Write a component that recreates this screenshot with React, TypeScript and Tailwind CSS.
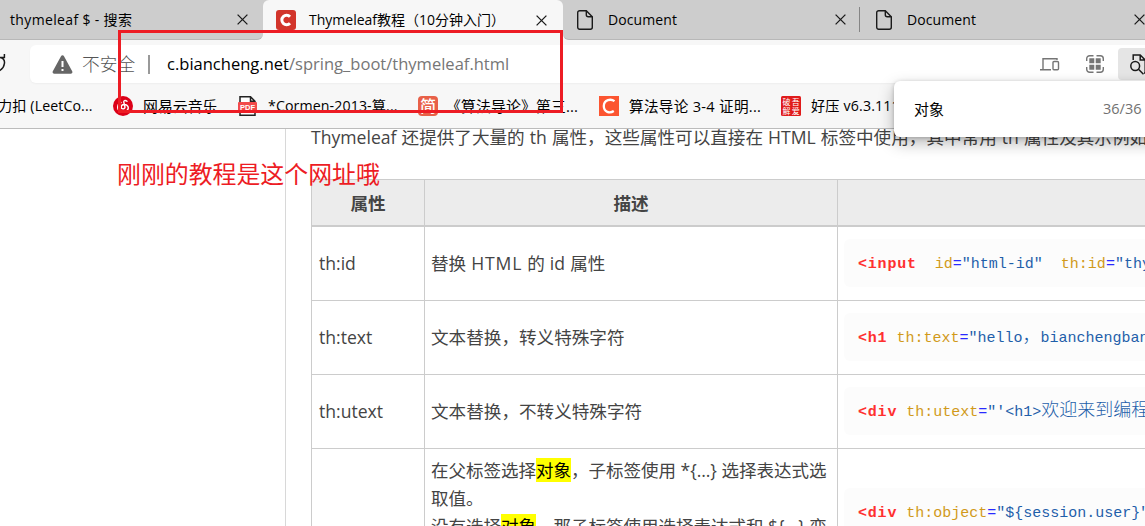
import React from "react";

function Close() {
  return (
    <svg className="size-[11px] shrink-0" viewBox="0 0 11 11" stroke="#1a1a1a" strokeWidth="1.3">
      <path d="M.6.6 10.4 10.4M10.4.6.6 10.4" />
    </svg>
  );
}

function PageIcon() {
  return (
    <svg className="h-5 w-4 shrink-0" viewBox="0 0 16 20" fill="none" stroke="#1a1a1a" strokeWidth="1.4">
      <path d="M2.7.7h6.6l6 6v10.6a2 2 0 0 1-2 2H2.7a2 2 0 0 1-2-2V2.7a2 2 0 0 1 2-2Z" />
      <path d="M9.3.7v4a2 2 0 0 0 2 2h4" />
    </svg>
  );
}

function TabStrip() {
  return (
    <div className="flex h-10 bg-[#f7f7f7] text-[14px] leading-5 text-black">
      <div className="flex w-[263px] shrink-0 items-center rounded-br-md border-b border-[#b8b8b8] bg-[#cdcdcd] pl-[10px]">
        <span className="w-[227px] tracking-[0.35px]">thymeleaf $ - 搜索</span>
        <Close />
      </div>
      <div className="w-[300px] shrink-0 bg-[linear-gradient(#cdcdcd_50%,#f7f7f7_50%)]">
        <div className="flex h-10 items-center rounded-t-md bg-[#f7f7f7] pl-[13px]">
          <svg className="size-5 shrink-0" viewBox="0 0 20 20">
            <rect width="20" height="20" rx="3" fill="#d2342b" />
            <path d="M14 6.8A4.7 4.7 0 1 0 14 13.2" fill="none" stroke="#fff" strokeWidth="3" />
          </svg>
          <span className="ml-[13px] w-[227px]">Thymeleaf教程（10分钟入门）</span>
          <Close />
        </div>
      </div>
      <div className="flex w-[600px] shrink-0 items-center rounded-bl-md border-b border-[#b8b8b8] bg-[#cdcdcd] pl-[14px]">
        <PageIcon />
        <span className="ml-[15px] w-[227px] tracking-[0.1px]">Document</span>
        <Close />
        <div className="ml-[13px] h-[25px] w-px bg-[#858585]" />
        <div className="w-4" />
        <PageIcon />
        <span className="ml-[15px] w-[227px] tracking-[0.1px]">Document</span>
        <Close />
      </div>
    </div>
  );
}

function AddressBar() {
  return (
    <div className="flex h-[43px] items-start pt-[5px]">
      <svg className="mt-[9px] h-5 w-[30px] shrink-0" viewBox="0 0 30 20" fill="none" stroke="#1a1a1a" strokeWidth="1.5">
        <path d="M-1 3.5C3 3.5 5 6 4.4 9.5 4 13 2 15.5-1 17M-2 3.4 4.4 3.4V-1" />
      </svg>
      <div className="flex h-[38px] w-[1140px] shrink-0 items-center rounded-l-md bg-white pl-[22px] shadow-[0_1px_2px_rgba(0,0,0,0.04)]">
        <svg className="h-[19px] w-[21px] shrink-0" viewBox="0 0 21 19">
          <path d="M9 1.2a1.7 1.7 0 0 1 3 0l8.2 15.1a1.7 1.7 0 0 1-1.5 2.5H2.3a1.7 1.7 0 0 1-1.5-2.5Z" fill="#666" />
          <path d="M10.5 6v6M10.5 14v2" stroke="#fff" strokeWidth="2" />
        </svg>
        <span className="ml-[9px] w-[66px] text-[17.7px] font-light text-[#555]">不安全</span>
        <div className="h-[19px] w-[2px] bg-[#999]" />
        <span className="ml-[17px] w-[873px] text-[16.55px] whitespace-nowrap text-[#767676]">
          <span className="text-black">c.biancheng.net</span>/spring_boot/thymeleaf.html
        </span>
        <svg className="h-[13px] w-[20px] shrink-0" viewBox="0 0 20 13" fill="none" stroke="#757575" strokeWidth="1.4">
          <path d="M17 2V.8H3V11M0 11.7h11" />
          <rect x="13" y="3.5" width="5.5" height="8.2" rx="1" />
        </svg>
        <svg className="ml-[26px] size-[18px] shrink-0" viewBox="0 0 18 18" fill="none" stroke="#757575" strokeWidth="1.4">
          <path d="M.7 6V3.7a3 3 0 0 1 3-3H7.5M10.5.7h3.8a3 3 0 0 1 3 3V6M17.3 12v2.3a3 3 0 0 1-3 3H10.5M7.5 17.3H3.7a3 3 0 0 1-3-3V12" />
          <path d="M3.3 3.3h5v5h-5zM9.7 3.3h5v5h-5zM3.3 9.7h5v5h-5zM9.7 9.7h5v5h-5z" fill="#757575" stroke="none" />
        </svg>
        <div className="ml-[14px] flex h-8 w-12 shrink-0 items-center rounded-l-sm bg-[#e5e5e5] pl-[12px]">
          <svg className="h-[21px] w-[22px]" viewBox="0 0 22 21" fill="none" stroke="#1a1a1a" strokeWidth="1.5">
            <path d="M3.2 6V1h7l5 5v13H14M10.2 1v5H15" />
            <circle cx="5.2" cy="12" r="4.4" />
            <path d="m8.5 15.2 5 5" />
          </svg>
        </div>
      </div>
    </div>
  );
}

function Bookmarks() {
  return (
    <div className="flex h-[45px] items-center text-[14.2px] leading-5 whitespace-nowrap text-black">
      <span className="w-[113px] shrink-0 -indent-[2px] tracking-[0.1px]">力扣 (LeetCo...</span>
      <svg className="size-5 shrink-0" viewBox="0 0 20 20">
        <circle cx="10" cy="10" r="10" fill="#dc0018" />
        <path d="M14 5.3c-2-1.6-3.6-.5-3.2 1l1.2 4.8a1.9 1.9 0 1 1-3.8-.3c.3-2.7 5.3-3.5 7 .2.8 4.2-4.7 6.4-8.3 4.4C3.5 13 4.2 8 8 6.5" fill="none" stroke="#fff" strokeWidth="1.4" strokeLinecap="round" />
      </svg>
      <span className="ml-[10px] w-[95px] shrink-0 text-[14.9px]">网易云音乐</span>
      <svg className="h-5 w-[19px] shrink-0" viewBox="0 0 19 20">
        <path d="M2 19.2V.8h10.5L17 5.3v13.9ZM12.5.8v4.5H17" fill="#fff" stroke="#222" strokeWidth="1.5" />
        <rect y="6" width="19" height="9.5" rx="1" fill="#f24a4a" />
        <text x="9.5" y="13.5" textAnchor="middle" fontFamily="Liberation Sans" fontWeight="bold" fontSize="7.5" fill="#fff">PDF</text>
      </svg>
      <span className="ml-[11px] w-[150px] shrink-0 tracking-[0.1px]">*Cormen-2013-算...</span>
      <span className="flex size-5 shrink-0 items-center justify-center rounded-sm bg-[#e86048] text-[16px] font-medium text-white">简</span>
      <span className="ml-[8px] w-[153px] shrink-0 text-[14.9px] tracking-[0.1px]">《算法导论》第三...</span>
      <svg className="size-5 shrink-0" viewBox="0 0 20 20">
        <rect width="20" height="20" fill="#fc5531" />
        <path d="M15.5 5.2C12 2.6 5 3.5 4.8 10c0 6.3 6 7.6 10 5" fill="none" stroke="#fff" strokeWidth="2.3" />
      </svg>
      <span className="ml-[10px] w-[152px] shrink-0 text-[14.6px] tracking-[0.3px]">算法导论 3-4 证明...</span>
      <svg className="size-5 shrink-0" viewBox="0 0 20 20" fill="#fff" fontFamily="Noto Sans CJK SC" fontSize="8">
        <rect width="20" height="20" rx="1.5" fill="#e01b1b" />
        <text x="1.5" y="8.7">破</text>
        <text x="10.7" y="8.7">吾</text>
        <text x="1.5" y="17.7">解</text>
        <text x="10.7" y="17.7">爱</text>
      </svg>
      <span className="ml-[10px] tracking-[0.15px]">好压 v6.3.111</span>
    </div>
  );
}

type Part = { t: string; c: "tag" | "attr" | "eq" | "val" | "cjk" };
const partClass: Record<Part["c"], string> = {
  tag: "font-bold text-[#ff3030] tracking-[0.8px]",
  attr: "text-[#d19a1a]",
  eq: "text-[#2a2aff]",
  val: "text-[#1f5faa]",
  cjk: "text-[#1f5faa] font-light text-[18px] leading-[12px]",
};

function Code({ parts }: { parts: Part[] }) {
  return (
    <div className="ml-[6px] flex h-12 items-baseline rounded-md bg-[#fcfcfc] pt-[16px] pl-[14px] font-['Liberation_Mono','Noto_Sans_CJK_SC',monospace] text-[15px] leading-5 whitespace-pre">
      {parts.map((p, i) => (
        <span key={i} className={partClass[p.c]}>{p.t}</span>
      ))}
    </div>
  );
}

function Mark() {
  return <mark className="bg-[#ffff00] text-black">对象</mark>;
}

function Row({ name, children, parts, tall }: { name: string; children: React.ReactNode; parts: Part[]; tall?: boolean }) {
  return (
    <div className={tall ? "flex h-[128px]" : "flex h-[74px] border-b border-[#ccc]"}>
      <div className="flex w-[113px] shrink-0 items-center border-r border-[#ccc] pl-[7px]">{name}</div>
      <div className={tall ? "w-[413px] shrink-0 border-r border-[#ccc] pt-[8px] pl-[6px] leading-[27.8px] whitespace-nowrap" : "flex w-[413px] shrink-0 items-center border-r border-[#ccc] pl-[6px] whitespace-pre"}>
        {children}
      </div>
      <div className={tall ? "flex grow flex-col pt-[39px]" : "flex grow flex-col pt-[12px]"}>
        <Code parts={parts} />
      </div>
    </div>
  );
}

function Article() {
  return (
    <div className="flex h-[397px] overflow-hidden bg-white text-[17.6px] text-[#444]">
      <div className="w-[286px] shrink-0 border-r border-[#d8d8d8]" />
      <div className="w-[1000px] shrink-0 pl-[25px]">
        <p className="-mt-[6px] h-[56px] leading-7 whitespace-nowrap [word-spacing:0.5px]">
          Thymeleaf 还提供了大量的 th 属性，这些属性可以直接在 HTML 标签中使用，其中常用 th 属性及其示例如下表。
        </p>
        <div className="border-t border-l border-[#ccc]">
          <div className="flex h-[47px] border-b-2 border-[#ccc] bg-[#ececec] text-center leading-[47px] font-bold">
            <div className="w-[113px] border-r border-[#ccc]">属性</div>
            <div className="w-[413px] border-r border-[#ccc]">描述</div>
            <div className="grow" />
          </div>
          <Row name="th:id" parts={[{ t: "<input", c: "tag" }, { t: "  id", c: "attr" }, { t: "=", c: "eq" }, { t: "\"html-id\"", c: "val" }, { t: "  th:id", c: "attr" }, { t: "=", c: "eq" }, { t: "\"thymeleaf-id\"", c: "val" }]}>
            <span className="[word-spacing:0.5px]">替换 <span className="tracking-[0.8px]">HTML</span> 的 id 属性</span>
          </Row>
          <Row name="th:text" parts={[{ t: "<h1", c: "tag" }, { t: " th:text", c: "attr" }, { t: "=", c: "eq" }, { t: "\"hello", c: "val" }, { t: "，", c: "cjk" }, { t: "bianchengbang\"", c: "val" }]}>
            文本替换，转义特殊字符
          </Row>
          <Row name="th:utext" parts={[{ t: "<div", c: "tag" }, { t: " th:utext", c: "attr" }, { t: "=", c: "eq" }, { t: "\"'<h1>", c: "val" }, { t: "欢迎来到编程帮", c: "cjk" }]}>
            文本替换，不转义特殊字符
          </Row>
          <Row tall name="" parts={[{ t: "<div", c: "tag" }, { t: " th:object", c: "attr" }, { t: "=", c: "eq" }, { t: "\"${session.user}\"", c: "val" }]}>
            <div className="text-[17.5px]">
              在父标签选择<Mark />，子标签使用 *{"{…}"} 选择表达式选<br />
              取值。<br />
              没有选择<Mark />，那子标签使用选择表达式和 ${"{…}"} 变
            </div>
          </Row>
        </div>
      </div>
    </div>
  );
}

export default function App() {
  return (
    <div className="relative h-[526px] w-[1145px] overflow-hidden bg-[#f7f7f7] font-['Open_Sans','Noto_Sans_CJK_SC',sans-serif]">
      <TabStrip />
      <AddressBar />
      <Bookmarks />
      <div className="h-px bg-[#bcbcbc]" />
      <Article />
      <div className="absolute top-[81px] left-[894px] flex h-14 w-[300px] items-center rounded-md bg-white pl-[20px] text-[15px] text-black shadow-[0_6px_16px_rgba(0,0,0,0.28),0_1px_4px_rgba(0,0,0,0.2)]">
        <span className="w-[189px]">对象</span>
        <span className="text-[14.5px] text-[#717171]">36/36</span>
      </div>
      <div className="absolute top-[30px] left-[118px] h-[83px] w-[445px] border-3 border-[#ed1c24]" />
      <div className="absolute top-[156px] left-[117px] text-[23.9px] leading-9 whitespace-nowrap text-[#ed1c24]">刚刚的教程是这个网址哦</div>
    </div>
  );
}
